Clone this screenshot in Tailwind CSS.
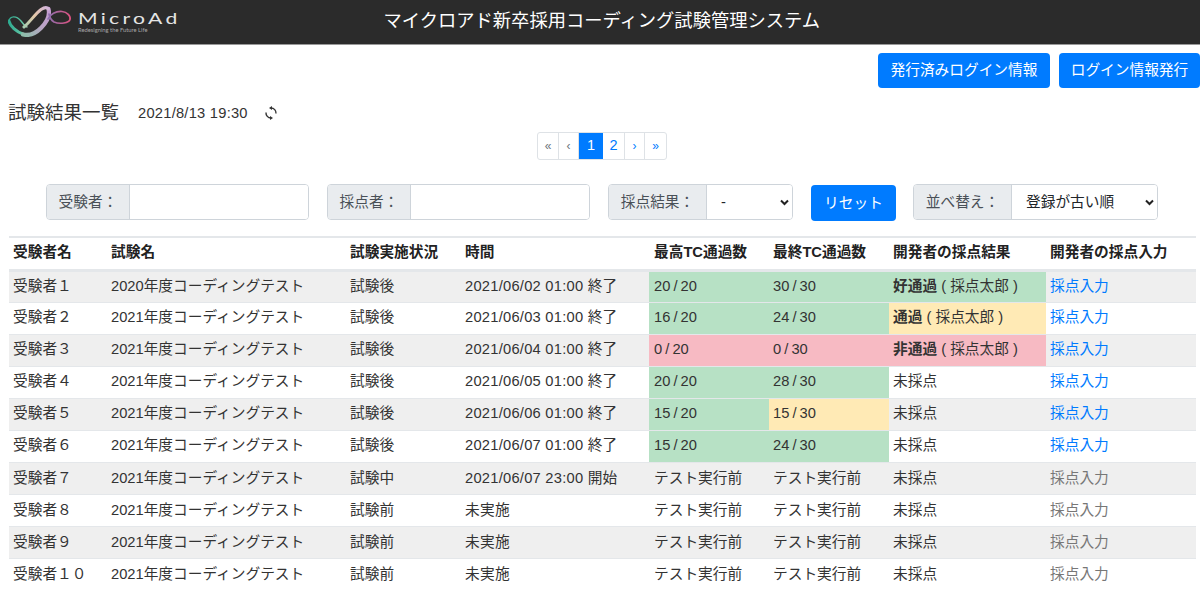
<!DOCTYPE html>
<html lang="en">
<head>
    <meta charset="UTF-8">
    <title>マイクロアド新卒採用コーディング試験管理システム</title>
    <script src="https://cdn.jsdelivr.net/npm/@tailwindcss/browser@4"></script>
</head>
<body class="bg-white text-[#333] text-[14.7px] font-['Liberation_Sans','Noto_Sans_CJK_JP',sans-serif] overflow-hidden">

<header class="relative h-[45px] bg-[#2b2b2b] border-b border-[#999] flex items-center">
    <div class="flex items-center pl-[8px] w-[190px] shrink-0">
        <svg width="64" height="31" viewBox="8 6 64 31" fill="none" class="mt-[-1px]" stroke-linecap="round">
            <defs>
                <linearGradient id="teal" x1="8" y1="0" x2="28" y2="0" gradientUnits="userSpaceOnUse">
                    <stop offset="0" stop-color="#2aa98f"/>
                    <stop offset="0.7" stop-color="#62c4a4"/>
                    <stop offset="1" stop-color="#a9c8b0"/>
                </linearGradient>
                <linearGradient id="rise" x1="24" y1="27" x2="48" y2="8" gradientUnits="userSpaceOnUse">
                    <stop offset="0" stop-color="#a8ccb0"/>
                    <stop offset="0.5" stop-color="#e6c8a8"/>
                    <stop offset="1" stop-color="#d2b4d8"/>
                </linearGradient>
                <linearGradient id="fall" x1="48" y1="9" x2="24" y2="35" gradientUnits="userSpaceOnUse">
                    <stop offset="0" stop-color="#c49cd2"/>
                    <stop offset="0.5" stop-color="#b9a4c4"/>
                    <stop offset="1" stop-color="#8fbcaa"/>
                </linearGradient>
                <linearGradient id="loop" x1="48" y1="0" x2="71" y2="0" gradientUnits="userSpaceOnUse">
                    <stop offset="0" stop-color="#8b6fb0"/>
                    <stop offset="1" stop-color="#e0517f"/>
                </linearGradient>
            </defs>
            <path d="M9 21C10 16 16 15 21 21C23 24 25 26 27 27" stroke="url(#teal)" stroke-width="1.400"/>
            <path d="M9 21C10 26 16 32 24 34.500" stroke="url(#teal)" stroke-width="3"/>
            <path d="M48.500 9C50 15 47 22 41 28C36 33 29 36 23 34.500" stroke="url(#fall)" stroke-width="4.200"/>
            <path d="M24 27C30 22 35 14 41 9.500C44 7.500 47 7 48.500 9" stroke="url(#rise)" stroke-width="3"/>
            <path d="M48 19C50 14 56 11 62 11.500C67 12 71 16 70 19.500C69 23 60 24.500 54 22C51 20 49.500 17 49 14" stroke="url(#loop)" stroke-width="1.700"/>
        </svg>
        <div class="ml-[6px] text-[#e4e4e4] font-['Lato',sans-serif]">
            <div class="text-[16px] tracking-[2.500px] leading-[16px] whitespace-nowrap origin-left scale-x-[1.32]">MicroAd</div>
            <div class="text-[5.800px] leading-[8px] text-[#a8a8a8] whitespace-nowrap">Redesigning the Future Life</div>
        </div>
    </div>
    <h1 class="absolute left-[383.500px] top-[9px] text-[18.3px] leading-[24px] text-white">マイクロアド新卒採用コーディング試験管理システム</h1>
</header>

<main class="pl-[9px] pr-[5px]">
    <div class="flex justify-end gap-[9px] pt-[8px] -mr-[5px]">
        <button class="h-[35px] w-[172px] bg-[#007bff] text-white rounded-[4px]">発行済みログイン情報</button>
        <button class="h-[35px] w-[141px] bg-[#007bff] text-white rounded-[4px]">ログイン情報発行</button>
    </div>

    <div class="flex items-center h-[28px] mt-[11px] -mb-[1px]">
        <h2 class="text-[18.5px] w-[129px] -ml-[1px] mr-[1px]">試験結果一覧</h2>
        <span class="w-[126px] tracking-[0.24px]">2021/8/13 19:30</span>
        <svg width="14" height="14" viewBox="0 0 14 14" fill="none" stroke="#333" stroke-width="1.400" class="-mt-[1px]">
            <path d="M7 2A5 5 0 0 1 12 7.500"/>
            <path d="M7 12A5 5 0 0 1 2 6.500"/>
            <path d="M8 0L8 4L5 2Z" fill="#333" stroke="none"/>
            <path d="M6 10L6 14L9 12Z" fill="#333" stroke="none"/>
        </svg>
    </div>

    <nav class="flex justify-center mt-[6px]">
        <ul class="flex h-[28px] text-[12px] border border-[#dee2e6] rounded-[3px] overflow-hidden">
            <li class="w-[21px] flex items-center justify-center border-r border-[#dee2e6] text-[#6c757d]">«</li>
            <li class="w-[20px] flex items-center justify-center border-r border-[#dee2e6] text-[#6c757d]">‹</li>
            <li class="w-[24px] flex items-center justify-center bg-[#007bff] text-white text-[14.5px]">1</li>
            <li class="w-[22px] flex items-center justify-center border-r border-[#dee2e6] text-[#007bff] text-[14.5px]">2</li>
            <li class="w-[20px] flex items-center justify-center border-r border-[#dee2e6] text-[#007bff]">›</li>
            <li class="w-[21px] flex items-center justify-center text-[#007bff]">»</li>
        </ul>
    </nav>

    <form class="flex items-start pl-[37px] mt-[24px] h-[37px]">
        <div class="flex w-[263px] h-[36px] border border-[#ced4da] rounded-[4px] overflow-hidden">
            <span class="w-[83px] flex items-center justify-center bg-[#e9ecef] border-r border-[#ced4da] text-[#495057]">受験者：</span>
            <input class="flex-1 min-w-0 bg-white">
        </div>
        <div class="flex w-[263px] h-[36px] ml-[18px] border border-[#ced4da] rounded-[4px] overflow-hidden">
            <span class="w-[83px] flex items-center justify-center bg-[#e9ecef] border-r border-[#ced4da] text-[#495057]">採点者：</span>
            <input class="flex-1 min-w-0 bg-white">
        </div>
        <div class="relative flex w-[185px] h-[36px] ml-[18px] border border-[#ced4da] rounded-[4px] overflow-hidden">
            <span class="w-[98px] flex items-center justify-center bg-[#e9ecef] border-r border-[#ced4da] text-[#495057]">採点結果：</span>
            <select class="flex-1 min-w-0 appearance-none bg-white pl-[14px] text-[#212529]"><option>-</option></select>
            <svg class="absolute right-[3px] top-[14px] pointer-events-none" width="9" height="7" viewBox="0 0 9 7" fill="none" stroke="#222" stroke-width="2"><path d="M1 1.500L4.500 5L8 1.500"/></svg>
        </div>
        <button type="button" class="w-[85px] h-[36px] mt-[1px] ml-[18px] bg-[#007bff] text-white rounded-[4px]">リセット</button>
        <div class="relative flex w-[245px] h-[36px] ml-[17px] border border-[#ced4da] rounded-[4px] overflow-hidden">
            <span class="w-[98px] flex items-center justify-center bg-[#e9ecef] border-r border-[#ced4da] text-[#495057]">並べ替え：</span>
            <select class="flex-1 min-w-0 appearance-none bg-white pl-[14px] text-[#212529]"><option>登録が古い順</option></select>
            <svg class="absolute right-[3px] top-[14px] pointer-events-none" width="9" height="7" viewBox="0 0 9 7" fill="none" stroke="#222" stroke-width="2"><path d="M1 1.500L4.500 5L8 1.500"/></svg>
        </div>
    </form>

    <table class="table-fixed w-[1187px] mt-[15px] border-collapse">
        <colgroup>
            <col class="w-[98px]"><col class="w-[239px]"><col class="w-[114px]"><col class="w-[189px]"><col class="w-[120px]"><col class="w-[120px]"><col class="w-[157px]"><col class="w-[150px]">
        </colgroup>
        <thead>
            <tr class="h-[33px] border-t-2 border-b-[3px] border-[#e4e7ea] text-left text-[#222]">
                <th class="pl-[4px] pb-[2px] font-bold">受験者名</th>
                <th class="pl-[4px] pb-[2px] font-bold">試験名</th>
                <th class="pl-[4px] pb-[2px] font-bold">試験実施状況</th>
                <th class="pl-[5px] pb-[2px] font-bold">時間</th>
                <th class="pl-[5px] pb-[2px] font-bold">最高TC通過数</th>
                <th class="pl-[4px] pb-[2px] font-bold">最終TC通過数</th>
                <th class="pl-[4px] pb-[2px] font-bold">開発者の採点結果</th>
                <th class="pl-[4px] pb-[2px] font-bold">開発者の採点入力</th>
            </tr>
        </thead>
        <tbody id="exam-rows"></tbody>
    </table>
</main>

<script>
    const GREEN = 'bg-[#b7e1c5]';
    const YELLOW = 'bg-[#ffeab5]';
    const RED = 'bg-[#f7bac3]';
    const graded = (label) => `<b class="font-bold">${label}</b> ( 採点太郎 )`;
    const PENDING = 'テスト実行前';

    // name, exam, status, time, best, bestColor, last, lastColor, grade, gradeColor, link enabled
    const rows = [
        ['受験者１', '2020年度コーディングテスト', '試験後', '2021/06/02 01:00 終了', '20 / 20', GREEN, '30 / 30', GREEN, graded('好通過'), GREEN, true],
        ['受験者２', '2021年度コーディングテスト', '試験後', '2021/06/03 01:00 終了', '16 / 20', GREEN, '24 / 30', GREEN, graded('通過'), YELLOW, true],
        ['受験者３', '2021年度コーディングテスト', '試験後', '2021/06/04 01:00 終了', '0 / 20', RED, '0 / 30', RED, graded('非通過'), RED, true],
        ['受験者４', '2021年度コーディングテスト', '試験後', '2021/06/05 01:00 終了', '20 / 20', GREEN, '28 / 30', GREEN, '未採点', '', true],
        ['受験者５', '2021年度コーディングテスト', '試験後', '2021/06/06 01:00 終了', '15 / 20', GREEN, '15 / 30', YELLOW, '未採点', '', true],
        ['受験者６', '2021年度コーディングテスト', '試験後', '2021/06/07 01:00 終了', '15 / 20', GREEN, '24 / 30', GREEN, '未採点', '', true],
        ['受験者７', '2021年度コーディングテスト', '試験中', '2021/06/07 23:00 開始', PENDING, '', PENDING, '', '未採点', '', false],
        ['受験者８', '2021年度コーディングテスト', '試験前', '未実施', PENDING, '', PENDING, '', '未採点', '', false],
        ['受験者９', '2021年度コーディングテスト', '試験前', '未実施', PENDING, '', PENDING, '', '未採点', '', false],
        ['受験者１０', '2021年度コーディングテスト', '試験前', '未実施', PENDING, '', PENDING, '', '未採点', '', false],
    ];

    document.getElementById('exam-rows').innerHTML = rows.map((r, i) => `
        <tr class="h-[32.1px] border-b last:border-b-0 border-[#e4e7ea] ${i % 2 === 0 ? 'bg-[#efefef]' : 'bg-white'}">
            <td class="pl-[4px] pb-[2px]">${r[0]}</td>
            <td class="pl-[4px] pb-[2px]">${r[1]}</td>
            <td class="pl-[4px] pb-[2px]">${r[2]}</td>
            <td class="pl-[5px] pb-[2px] tracking-[0.25px]">${r[3]}</td>
            <td class="pl-[5px] pb-[2px] [word-spacing:-1px] ${r[5]}">${r[4]}</td>
            <td class="pl-[4px] pb-[2px] [word-spacing:-1px] ${r[7]}">${r[6]}</td>
            <td class="pl-[4px] pb-[2px] ${r[9]}">${r[8]}</td>
            <td class="pl-[4px] pb-[2px] ${r[10] ? 'text-[#007bff]' : 'text-[#777]'}">採点入力</td>
        </tr>`).join('');
</script>
</body>
</html>
